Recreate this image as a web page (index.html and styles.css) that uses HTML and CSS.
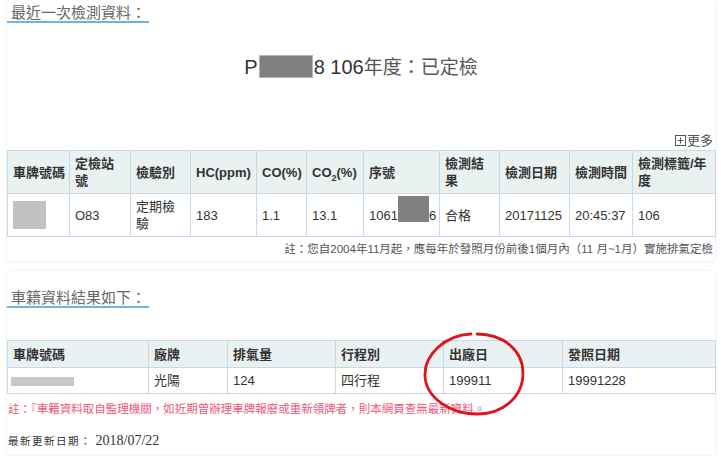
FILE: index.html
```html
<!DOCTYPE html>
<html lang="zh-Hant">
<head>
    <meta charset="UTF-8">
    <meta name="viewport" content="width=device-width, initial-scale=1.0">
    <title>排氣定檢查詢結果</title>
    <link rel="stylesheet" href="styles.css">
</head>
<body>
<div class="panel">
    <h3 class="section-title">最近一次檢測資料：</h3>
    <div class="result-title">P<span class="mask mask-plate"></span>8 106<span class="cjk">年度：已定檢</span></div>
    <div class="more">
        <svg class="more-icon" viewBox="0 0 11 11" width="11" height="11">
            <rect x="0.5" y="0.5" width="10" height="10" fill="none" stroke="#555" stroke-width="1"/>
            <path d="M2.5 5.5h6M5.5 2.5v6" stroke="#555" stroke-width="1"/>
        </svg>更多
    </div>
    <table class="data-table check-table">
        <colgroup>
            <col class="w62"><col class="w61"><col class="w60"><col class="w66"><col class="w50"><col class="w57">
            <col class="w76"><col class="w60"><col class="w70"><col class="w63"><col class="w83">
        </colgroup>
        <thead>
        <tr>
            <th>車牌號碼</th>
            <th>定檢站<br>號</th>
            <th>檢驗別</th>
            <th>HC(ppm)</th>
            <th>CO(%)</th>
            <th>CO<sub>2</sub>(%)</th>
            <th>序號</th>
            <th>檢測結<br>果</th>
            <th>檢測日期</th>
            <th>檢測時間</th>
            <th>檢測標籤/年<br>度</th>
        </tr>
        </thead>
        <tbody>
        <tr>
            <td><span class="mask mask-photo"></span></td>
            <td>O83</td>
            <td>定期檢<br>驗</td>
            <td>183</td>
            <td>1.1</td>
            <td>13.1</td>
            <td class="serial">1061<span class="mask mask-serial"></span>6</td>
            <td>合格</td>
            <td>20171125</td>
            <td>20:45:37</td>
            <td>106</td>
        </tr>
        </tbody>
    </table>
    <p class="note">註：您自2004年11月起，應每年於發照月份前後1個月內（11 月~1月）實施排氣定檢</p>
</div>

<div class="panel panel-car">
    <h3 class="section-title">車籍資料結果如下：</h3>
    <table class="data-table car-table">
        <colgroup>
            <col class="w141"><col class="w79"><col class="w108"><col class="w108"><col class="w119"><col class="w153">
        </colgroup>
        <thead>
        <tr>
            <th>車牌號碼</th>
            <th>廠牌</th>
            <th>排氣量</th>
            <th>行程別</th>
            <th>出廠日</th>
            <th>發照日期</th>
        </tr>
        </thead>
        <tbody>
        <tr>
            <td><span class="mask mask-bar"></span></td>
            <td>光陽</td>
            <td>124</td>
            <td>四行程</td>
            <td>199911</td>
            <td>19991228</td>
        </tr>
        </tbody>
    </table>
    <p class="warn">註：『車籍資料取自監理機關，如近期曾辦理車牌報廢或重新領牌者，則本網頁查無最新資料。</p>
    <p class="updated"><span class="updated-label">最新更新日期：</span> 2018/07/22</p>

    <!-- hand-drawn mark around the factory date column -->
    <svg class="circle-mark" viewBox="0 0 110 90" width="110" height="90">
        <path d="M58 5 C85 5 104 22 104 44 C104 68 84 85 58 85 C30 85 7 68 6 47 C5 26 26 6 52 5"
              fill="none" stroke="#e0121c" stroke-width="2.8" stroke-linecap="round"/>
    </svg>
</div>
</body>
</html>
```

FILE: styles.css
```css
body {
    margin: 0;
    background-color: #ffffff;
    font-family: "Liberation Sans", "Noto Sans CJK TC", sans-serif;
    color: #333;
}

.panel {
    margin: 0 6px 10px 7px;
    padding: 4px 0;
    background-color: #ffffff;
    border-radius: 4px;
    box-shadow: 0 0 3px rgba(0, 0, 0, 0.12);
}

.panel-car {
    position: relative;
    padding: 18px 0 6px;
}

.section-title {
    width: fit-content;
    margin: 0;
    padding: 0 3px 0 4px;
    font-size: 15px;
    line-height: 17px;
    font-weight: normal;
    color: #666;
    border-bottom: 2px solid #70b4dc;
}

.result-title {
    margin-top: 30px;
    text-align: center;
    font-size: 20px;
    line-height: 28px;
    color: #333;
}

.result-title .cjk {
    color: #555;
    font-size: 19px;
}

.mask {
    display: inline-block;
}

.mask-plate {
    width: 52px;
    height: 21px;
    margin: 0 1px;
    background-color: #808080;
    border: 1px solid #b4b4b4;
    vertical-align: -4px;
}

.mask-photo {
    width: 33px;
    height: 28px;
    background-color: #c2c2c2;
    vertical-align: middle;
}

/* redaction box sits above the line without pushing the text down */
.mask-serial {
    width: 31px;
    height: 26px;
    margin-top: -11px;
    background-color: #808080;
    vertical-align: -2px;
}

.mask-bar {
    width: 63px;
    height: 9px;
    margin-left: -2px;
    background-color: #c8c8c8;
    vertical-align: middle;
}

.more {
    margin-top: 51px;
    padding-right: 2px;
    text-align: right;
    font-size: 13px;
    line-height: 16px;
    color: #555;
}

.more-icon {
    vertical-align: -1px;
    margin-right: 1px;
}

/* Tables */
.data-table {
    width: 100%;
    border-collapse: collapse;
    table-layout: fixed;
    font-size: 13px;
}

.check-table {
    margin-top: 1px;
}

.car-table {
    margin-top: 32px;
}

.data-table th,
.data-table td {
    padding: 4px 5px;
    border: 1px solid #c7d8ea;
    text-align: left;
    vertical-align: middle;
    line-height: 17px;
    white-space: nowrap;
    overflow: hidden;
}

.data-table th {
    background-color: #e9f1f1;
    font-weight: bold;
    color: #333;
}

.data-table td.serial {
    padding-right: 2px;
}

.car-table th {
    padding: 5px 5px 4px;
}

.data-table sub {
    font-size: 9px;
    line-height: 0;
}

.w50 { width: 50px; }
.w57 { width: 57px; }
.w60 { width: 60px; }
.w61 { width: 61px; }
.w62 { width: 62px; }
.w63 { width: 63px; }
.w66 { width: 66px; }
.w70 { width: 70px; }
.w76 { width: 76px; }
.w79 { width: 79px; }
.w83 { width: 83px; }
.w108 { width: 108px; }
.w119 { width: 119px; }
.w141 { width: 141px; }
.w153 { width: 153px; }

/* Notes */
.note {
    margin: 4px 2px 0 0;
    text-align: right;
    font-size: 11.5px;
    line-height: 16px;
    color: #555;
}

.warn {
    margin: 7px 0 0 1px;
    font-size: 11.5px;
    line-height: 16px;
    color: #f0557a;
}

.updated {
    margin: 16px 0 0 1px;
    font-family: "Liberation Serif", "Noto Sans CJK TC", serif;
    font-size: 14px;
    line-height: 16px;
    color: #333;
}

.updated-label {
    font-family: "Noto Sans CJK TC", sans-serif;
    font-size: 10.5px;
    letter-spacing: 1.5px;
}

.circle-mark {
    position: absolute;
    left: 412px;
    top: 58px;
    pointer-events: none;
}
```
